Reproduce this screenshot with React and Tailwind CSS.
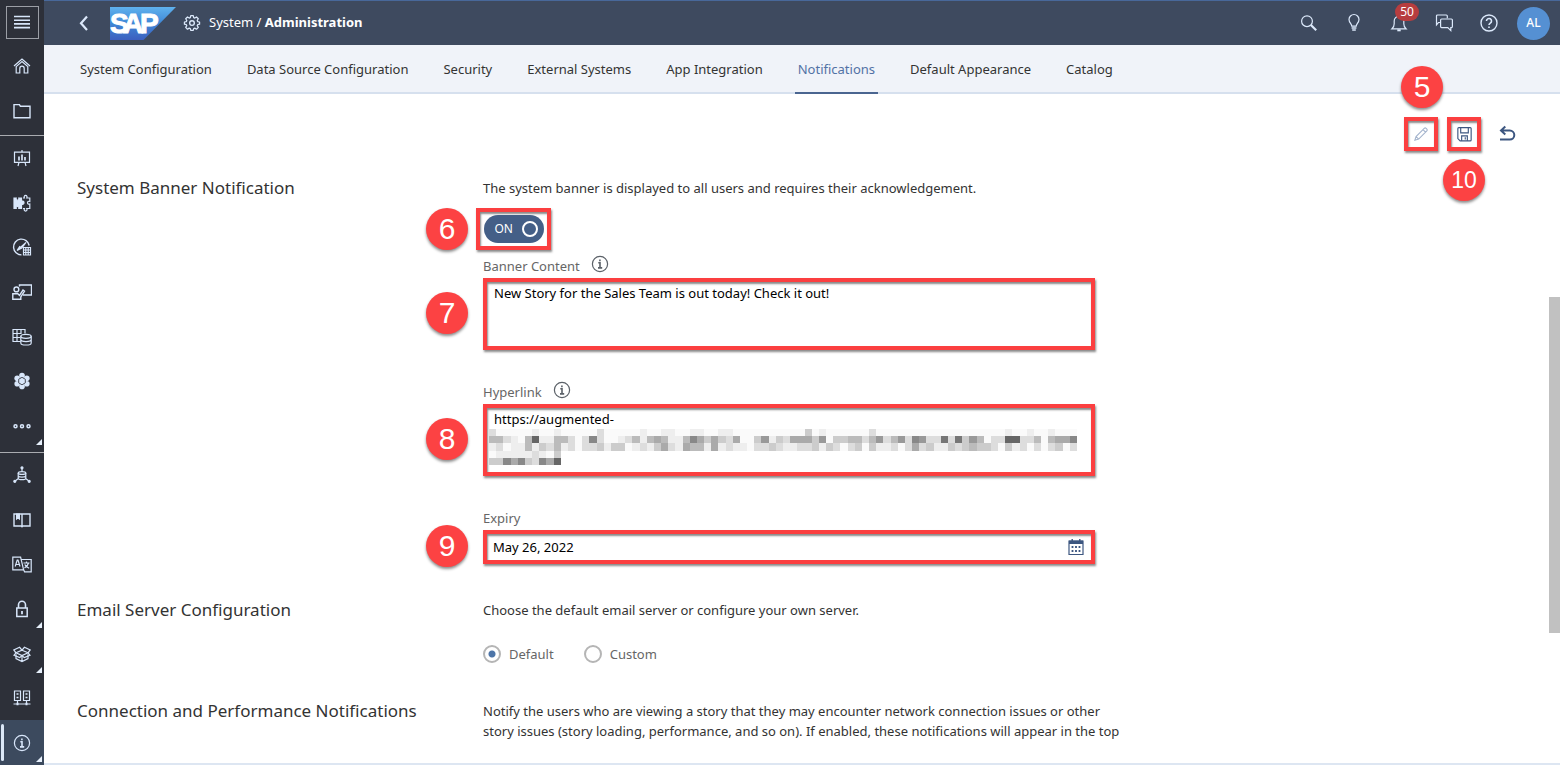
import React, { useState } from "react";

const ICONS = {
  menu: <path d="M2 4.5h16M2 8.2h16M2 11.9h16M2 15.6h16" strokeWidth="1.6" />,
  home: (
    <>
      <path d="M2 10 10 3l8 7" />
      <path d="M4.2 10.6 10 5.6l5.8 5v6.4h-3.6v-4.6a2.2 2.2 0 0 0-4.4 0V17H4.2z" />
    </>
  ),
  folder: <path d="M2 3.6h5.4l1 1.6H18v11.6H2z" strokeWidth="1.4" />,
  board: (
    <>
      <path d="M2.5 4.2h15v10.2h-15zM10 2v2M7 14.4 6 18M13 14.4l1 3.6" />
      <path d="M7 8.5v4M10 6.5v6M13 9v3.5" strokeWidth="1.7" />
    </>
  ),
  puzzle: (
    <>
      <path
        d="M2 5h2.200c-.4 1.400.4 2.200 1.300 2.200S7.200 6.400 6.800 5H9.500v3.200c1.600-.6 2.500.3 2.500 1.500s-.9 2.100-2.500 1.500V15.500H6.800c.4-1.400-.4-2.200-1.300-2.200s-1.700.8-1.300 2.200H2z"
        fill="currentColor"
      />
      <path d="M11 5h1.400c-.6-1.500 0-2.600 1.200-2.600s1.800 1.100 1.200 2.600h3v3.400c-1.400-.5-2.300.2-2.300 1.300s.9 1.800 2.300 1.300v4.500h-3c.6 1.500 0 2.600-1.200 2.600s-1.800-1.100-1.200-2.600H11" />
    </>
  ),
  compass: (
    <>
      <path d="M17.200 8.500A7.900 7.900 0 1 0 9.500 17.900" strokeWidth="1.400" />
      <path d="M5 13.500 14 5.500 9.800 11zM5 13.500l3-4.500" />
      <path d="M11.500 10.500h7v7.500h-7zM11.500 13h7M11.500 15.500h7M13.800 10.500V18M16.200 10.500V18" />
    </>
  ),
  presenter: (
    <>
      <path d="M7.500 4.500V3h12v10h-8.500" strokeWidth="1.400" />
      <circle cx="4.400" cy="7.400" r="2.400" strokeWidth="1.400" />
      <path d="M.8 17.300v-5.600h5l1.700 1.600L11 8l1.500 1.100L8.800 15v2.300z" strokeWidth="1.400" />
    </>
  ),
  griddb: (
    <>
      <path d="M8.500 14.500H1V2.500h12v4M1 6.500h8M1 10.500h7M5 2.500v12M9 2.500v4.500" />
      <ellipse cx="14" cy="9.300" rx="5.200" ry="2" />
      <path d="M8.800 9.300v6.600c0 1.200 2.300 2.100 5.200 2.100s5.200-.9 5.200-2.100V9.300M8.800 12.600c0 1.200 2.300 2 5.200 2s5.200-.8 5.200-2" />
    </>
  ),
  hexes: (
    <>
      <g fill="currentColor" stroke="none">
        <circle cx="10" cy="4.600" r="2.800" />
        <circle cx="10" cy="15.400" r="2.800" />
        <circle cx="5.200" cy="7.300" r="2.800" />
        <circle cx="14.800" cy="7.300" r="2.800" />
        <circle cx="5.200" cy="12.700" r="2.800" />
        <circle cx="14.800" cy="12.700" r="2.800" />
      </g>
      <path d="m10 6.300 3.300 1.900v3.700L10 13.800l-3.300-1.900V8.200z" fill="currentColor" stroke="#2d3039" strokeWidth=".8" />
    </>
  ),
  more: (
    <g strokeWidth="1.500">
      <circle cx="3.500" cy="10.200" r="1.500" />
      <circle cx="10" cy="10.200" r="1.500" />
      <circle cx="16.500" cy="10.200" r="1.500" />
    </g>
  ),
  dbnet: (
    <>
      <ellipse cx="10" cy="8" rx="3.800" ry="1.400" />
      <path d="M6.200 8v5.200c0 .9 1.700 1.500 3.800 1.500s3.800-.6 3.800-1.500V8M6.200 10.600c0 .9 1.700 1.500 3.800 1.500s3.800-.6 3.800-1.500M10 4v2.500M6 13.800l-2.500 2M14 13.800l2.500 2" />
      <g fill="currentColor">
        <circle cx="10" cy="2.800" r="1" />
        <circle cx="2.800" cy="16.300" r="1" />
        <circle cx="17.200" cy="16.300" r="1" />
      </g>
    </>
  ),
  book: (
    <>
      <path d="M2 4h16v12h-7.200l-.8.800-.8-.8H2zM10 4v12.500" strokeWidth="1.400" />
      <path d="M4.600 4h2.800v5L6 7.800 4.600 9z" fill="currentColor" />
    </>
  ),
  translate: (
    <>
      <path d="M.8 3.200h7.800l3 12.600H.8zM9.200 5.500h10v12.300h-6.600l-1-2" />
      <path d="m3.200 12.500 2-6.500h.8l2 6.500M3.800 10.500h3.600M11.500 9h6M14.500 7.500V9M16.500 9c-.6 2.500-2 4-4 5M12.800 10.500c.8 1.800 2.200 3 4.400 3.800" />
    </>
  ),
  lock: (
    <>
      <path d="M4.800 9h10.400v8.600H4.800z" strokeWidth="1.500" />
      <path d="M6.500 9V5.800a3.500 3.500 0 0 1 7 0V9" strokeWidth="1.600" />
      <path d="M10 12v3.200" strokeWidth="1.800" />
    </>
  ),
  box: (
    <>
      <path d="m10 6.200 6 2.600-6 2.700-6-2.700zM4 10.300v4.300l6 3 6-3v-4.300M10 11.500v6" />
      <path d="M4 8.800 1.800 5.900l5.800-2.600L10 6.200l2.400-2.900 5.800 2.600L16 8.800l2 2.400-5.700 2.400L10 11.500l-2.300 2.100L2 11.200z" />
    </>
  ),
  servers: (
    <>
      <path d="M2.500 3h6v9.500h-6zM11.500 3h6v9.500h-6zM5.500 12.500v3.500M14.500 12.500v3.500M1.500 16h17" />
      <path d="M5.500 5.200v1.600M5.500 8.700v1.600M14.500 5.200v1.600M14.500 8.700v1.600" strokeWidth="2" />
      <path d="M4.500 16h2M13.500 16h2" strokeWidth="2.600" />
    </>
  ),
  info: (
    <>
      <circle cx="10" cy="10" r="7.600" />
      <path d="M8.300 8.800H10v5M8 13.900h4.200M9.900 5.400v1.800" strokeWidth="1.600" />
    </>
  ),
  gear: (
    <>
      <path
        d="M8.600 1.900h2.800l.5 2.100 1.200.5 1.900-1.200 2 2-1.200 1.900.5 1.200 2.100.5v2.400l-2.100.5-.5 1.200 1.200 1.900-2 2-1.900-1.200-1.200.5-.5 2.100H8.600l-.5-2.100-1.200-.5L5 16.900l-2-2L4.200 13l-.5-1.200-2.100-.5V8.900l2.100-.5.5-1.200L3 5.300l2-2 1.900 1.200L8.100 4z"
        strokeLinejoin="round"
        strokeWidth="1.400"
      />
      <circle cx="10" cy="10.100" r="2.600" strokeWidth="1.500" />
    </>
  ),
  search: (
    <>
      <circle cx="8" cy="8.200" r="5.400" />
      <path d="m11.900 12 5.300 5.200" strokeWidth="2.200" />
    </>
  ),
  bulb: (
    <>
      <path d="M7.800 13.200c0-2.200-2.800-3.600-2.800-6.700a5 5 0 0 1 10 0c0 3.100-2.800 4.500-2.800 6.700z" />
      <path d="M7.600 15h4.800M8.200 17h3.600" strokeWidth="1.500" />
    </>
  ),
  bell: (
    <>
      <path d="M3 15.800h14c-1.800-1.600-2.200-3-2.200-5V8a4.800 4.800 0 0 0-9.600 0v2.800c0 2-.4 3.400-2.200 5z" />
      <path d="M8.300 17.300h3.400" strokeWidth="2" />
    </>
  ),
  chat: (
    <>
      <path d="M6.200 9.500H4.400L2.500 11.800V3a1 1 0 0 1 1-1h8.800a1 1 0 0 1 1 1v2.300" />
      <path d="M7.600 6h9.800a1 1 0 0 1 1 1v6.600a1 1 0 0 1-1 1h-.6v3l-3-3H7.600a1 1 0 0 1-1-1V7a1 1 0 0 1 1-1z" />
    </>
  ),
  help: (
    <>
      <circle cx="10" cy="10" r="8" strokeWidth="1.400" />
      <path d="M7.500 8a2.500 2.500 0 1 1 3.800 2.100c-.9.600-1.300 1-1.300 2M10 13.400v1.700" strokeWidth="1.600" />
    </>
  ),
  pencil: (
    <path d="m3.200 16.900 1.300-4.100L13.600 3.700a1.500 1.500 0 0 1 2.100 0l.8.800a1.500 1.500 0 0 1 0 2.100l-9.100 9.100zM12.200 5.200 15 8M4.500 12.800l2.900 2.900" />
  ),
  save: (
    <>
      <path d="M4 2.700h12a1 1 0 0 1 1 1v12a1 1 0 0 1-1 1H5.400L3 14.300V3.700a1 1 0 0 1 1-1z" />
      <path d="M6 2.700v5.600h8V2.700M7 16.700v-5.200h6v5.200M10.800 13v2.200" />
    </>
  ),
  undo: <path d="M8.300 2.600 4 6.600l4.300 4M4.300 6.600h8.500a4.500 4.500 0 0 1 0 9H3" strokeWidth="2" />,
  calendar: (
    <>
      <path d="M3 4h14v13.500H3z" />
      <path d="M3 5.300h14" strokeWidth="3.400" />
      <path d="M6.200 2v3M13.800 2v3" strokeWidth="1.400" />
      <path d="M5.600 10h1.800M9.100 10h1.800M12.600 10h1.800M5.600 14h1.800M9.100 14h1.800M12.600 14h1.800" strokeWidth="1.800" />
    </>
  ),
  back: <path d="m13 3.500-6 6.700 6 6.700" strokeWidth="2.200" />,
};

function Icon({ name, className = "size-5" }) {
  return (
    <svg viewBox="0 0 20 20" className={className} fill="none" stroke="currentColor" strokeWidth="1.200" aria-hidden="true">
      {ICONS[name]}
    </svg>
  );
}

const NAV_TOP = [
  { icon: "board", label: "Stories" },
  { icon: "puzzle", label: "Analytic Applications" },
  { icon: "compass", label: "Analyzer" },
  { icon: "presenter", label: "Digital Boardroom" },
  { icon: "griddb", label: "Modeler" },
  { icon: "hexes", label: "Predictive" },
  { icon: "more", label: "More", corner: true },
];

const NAV_BOTTOM = [
  { icon: "dbnet", label: "Connections" },
  { icon: "book", label: "Content Network" },
  { icon: "translate", label: "Translation" },
  { icon: "lock", label: "Security", corner: true },
  { icon: "box", label: "Transport", corner: true },
  { icon: "servers", label: "Deployment" },
  { icon: "info", label: "System", corner: true, active: true },
];

function NavItem({ icon, label, corner, active }) {
  return (
    <button
      aria-label={label}
      className={`relative flex w-full flex-1 items-center justify-center ${active ? "bg-[#3c4a5e]" : ""}`}
    >
      {active && <span className="absolute inset-y-1 left-px w-[3px] rounded bg-[#dbe8f8]" />}
      <Icon name={icon} />
      {corner && (
        <svg viewBox="0 0 6 6" className="absolute right-[2px] bottom-[3px] size-[6px]" aria-hidden="true">
          <path d="M6 0v6H0z" fill="#e6effb" />
        </svg>
      )}
    </button>
  );
}

function Sidebar() {
  return (
    <nav className="flex h-full w-11 shrink-0 flex-col bg-[#2d3039] text-[#d8e6fa]">
      <div className="flex h-[135px] shrink-0 flex-col pb-[2px]">
        <div className="flex flex-1 items-center justify-center">
          <button aria-label="Menu" className="flex size-[33px] items-center justify-center border border-[#9b9ea5]">
            <Icon name="menu" />
          </button>
        </div>
        <NavItem icon="home" label="Home" />
        <NavItem icon="folder" label="Files" />
      </div>
      <div className="flex flex-1 flex-col border-y border-[#a9abb0] pb-1">
        {NAV_TOP.map((item) => (
          <NavItem key={item.label} {...item} />
        ))}
      </div>
      <div className="flex flex-1 flex-col">
        {NAV_BOTTOM.map((item) => (
          <NavItem key={item.label} {...item} />
        ))}
      </div>
    </nav>
  );
}

function Logo() {
  return (
    <svg viewBox="0 0 66 33" className="h-[33px] w-[66px]" role="img" aria-label="SAP">
      <defs>
        <linearGradient id="sap" x1="0" y1="0" x2="0" y2="1">
          <stop offset="0" stopColor="#5fb2ee" />
          <stop offset="0.5" stopColor="#3f87d6" />
          <stop offset="1" stopColor="#3c5fbf" />
        </linearGradient>
      </defs>
      <path d="M0 0h66L33.500 33H0z" fill="url(#sap)" />
      <text x="0 13 30" y="26" fontFamily="Liberation Sans, sans-serif" fontWeight="700" fontSize="28" fill="#fff" stroke="#fff" strokeWidth="1">
        SAP
      </text>
    </svg>
  );
}

function Header() {
  return (
    <header className="flex h-[45px] shrink-0 items-center border-t border-[#48689a] bg-[#3e4a5f] pr-[10px] pl-[30px] text-[#dce9fb]">
      <button aria-label="Back">
        <Icon name="back" />
      </button>
      <div className="ml-4">
        <Logo />
      </div>
      <Icon name="gear" className="ml-[7px] size-[18px]" />
      <h1 className="ml-2 flex-1 text-white">
        System / <b className="font-bold">Administration</b>
      </h1>
      <div className="flex items-center gap-[25px]">
        <button aria-label="Search"><Icon name="search" /></button>
        <button aria-label="Tips"><Icon name="bulb" /></button>
        <button aria-label="Notifications" className="relative">
          <Icon name="bell" />
          <span className="absolute -top-[10px] left-[6px] flex h-[18px] w-6 items-center justify-center rounded-full bg-[#b73d3f] text-xs text-white">
            50
          </span>
        </button>
        <button aria-label="Chat"><Icon name="chat" /></button>
        <button aria-label="Help"><Icon name="help" /></button>
        <button className="-ml-[7px] flex size-[33px] items-center justify-center rounded-full bg-[#5590d3] text-xs font-medium text-white">
          AL
        </button>
      </div>
    </header>
  );
}

const TABS = [
  "System Configuration",
  "Data Source Configuration",
  "Security",
  "External Systems",
  "App Integration",
  "Notifications",
  "Default Appearance",
  "Catalog",
];

function Tabs() {
  return (
    <nav className="flex h-[49px] shrink-0 gap-[29px] border-b-2 border-[#d6e0ee] bg-[#f0f3f9] pl-[33px]">
      {TABS.map((tab) => (
        <a
          key={tab}
          href="#"
          className={`-mb-[2px] flex items-center border-b-2 px-[3px] pt-[2px] whitespace-nowrap ${
            tab === "Notifications" ? "border-[#4a6590] text-[#5272a5]" : "border-transparent text-[#333]"
          }`}
        >
          {tab}
        </a>
      ))}
    </nav>
  );
}

function Callout({ n, className }) {
  return (
    <span
      className={`absolute flex size-[42px] items-center justify-center rounded-full bg-[#fc4243] font-['Liberation_Sans',sans-serif] leading-none text-white shadow-[0_2px_3px_rgba(0,0,0,0.45)] ${
        n > 9 ? "text-[23px]" : "text-[30px]"
      } ${className}`}
    >
      {n}
    </span>
  );
}

const FRAME = "border-4 border-[#fb3f40] shadow-[1px_2px_2px_rgba(60,60,60,0.6),inset_1px_2px_2px_rgba(60,60,60,0.6)]";

function FieldLabel({ htmlFor, children, info }) {
  return (
    <div className="flex h-5 items-center gap-[10px] text-[#666]">
      <label htmlFor={htmlFor}>{children}</label>
      {info && (
        <button aria-label={`About ${children}`} className="mb-1 text-[#5b6168]">
          <Icon name="info" />
        </button>
      )}
    </div>
  );
}

const PIXELS = [
  "dfffffeffefffffdfffffeffeeffeeffeeffffffffffcfeffffffdffffffffffffffffffeffeffefff",
  "bbdefb6eebbdfd8dffedbebabeeb8acacdaffc9ecdaaac9fccbbdb9db9d89dd7d7c9bfdd66ddbfbaa8",
  "edfeebecdbedfddceccfedecadeabbeaedeefddcdeeddcecdfdcfceedfdadceecdcbccdfcedfdfdcfde",
  "feeeeedefc",
  "cc8a8cd8a6",
].map((row) => [...row].slice(0, 82));

function Mosaic() {
  return (
    <svg viewBox="0 0 82 5" preserveAspectRatio="none" className="absolute top-[25px] left-[6px] h-9 w-[588px]" shapeRendering="crispEdges" aria-hidden="true">
      {PIXELS.map((row, y) =>
        row.map((c, x) => (
          <rect key={`${x}-${y}`} x={x} y={y} width="1" height="1" fill={c === "f" ? "#fafafa" : `#${c}${c}${c}`} />
        ))
      )}
    </svg>
  );
}

function Section({ title, children }) {
  return (
    <section className="grid grid-cols-[406px_minmax(0,680px)] leading-5">
      <h2 className="text-[17px] leading-5 text-[#333]">{title}</h2>
      <div>{children}</div>
    </section>
  );
}

function Radio({ label, checked, onChange }) {
  return (
    <label className="flex items-center gap-2 text-[#666]">
      <input
        type="radio"
        name="server"
        checked={checked}
        onChange={onChange}
        className="size-[18px] appearance-none rounded-full border-2 border-[#b5b5b5] bg-white checked:bg-[radial-gradient(circle,#4d75a8_0_3px,#fff_4px)]"
      />
      {label}
    </label>
  );
}

function NotificationSettings() {
  const [on, setOn] = useState(true);
  const [server, setServer] = useState("default");
  return (
    <main className="relative min-h-0 flex-1 bg-white pl-[33px]">
      <div className="flex justify-end gap-[9px] pt-[23px] pr-9 text-[#3c5680]">
        <div className="relative">
          <button aria-label="Edit" className={`flex size-[34px] items-center justify-center text-[#a3b3cc] ${FRAME}`}>
            <Icon name="pencil" className="size-[18px]" />
          </button>
          <Callout n={5} className="-top-[51px] -left-[3px]" />
        </div>
        <div className="relative">
          <button aria-label="Save" className={`flex size-[34px] items-center justify-center ${FRAME}`}>
            <Icon name="save" className="size-[19px]" />
          </button>
          <Callout n={10} className="top-[42px] -left-[4px]" />
        </div>
        <button aria-label="Undo" className="flex size-[34px] items-center justify-center">
          <Icon name="undo" />
        </button>
      </div>

      <div className="mt-[27px] flex flex-col">
        <Section title="System Banner Notification">
          <p className="text-[#333]">The system banner is displayed to all users and requires their acknowledgement.</p>
          <div className={`relative mt-[10px] -ml-[7px] flex h-[42px] w-[75px] items-center justify-center ${FRAME}`}>
            <button
              role="switch"
              aria-checked={on}
              aria-label="System banner"
              onClick={() => setOn(!on)}
              className="flex h-7 w-[60px] shrink-0 items-center justify-between rounded-full bg-[#445f87] pr-[6px] pl-[11px] text-xs text-white"
            >
              {on ? "ON" : "OFF"}
              <span className="size-4 rounded-full border-2 border-white" />
            </button>
            <Callout n={6} className="-top-1 -left-[54px]" />
          </div>
          <div className="flex max-w-[612px] flex-col gap-8 pt-[6px]">
            <div className="flex flex-col gap-[2px]">
              <FieldLabel htmlFor="content" info>Banner Content</FieldLabel>
              <div className="relative flex">
                <textarea
                  id="content"
                  defaultValue="New Story for the Sales Team is out today! Check it out!"
                  className={`h-[72px] w-full resize-none px-[7px] py-px leading-5 text-black outline-none ${FRAME}`}
                />
                <Callout n={7} className="top-[14px] -left-[57px]" />
              </div>
            </div>
            <div className="flex flex-col gap-[2px]">
              <FieldLabel htmlFor="link" info>Hyperlink</FieldLabel>
              <div className="relative flex">
                <textarea
                  id="link"
                  defaultValue="https://augmented-"
                  className={`h-[72px] w-full resize-none px-[7px] py-px leading-5 text-black outline-none ${FRAME}`}
                />
                <Mosaic />
                <Callout n={8} className="top-[14px] -left-[57px]" />
              </div>
            </div>
            <div className="flex flex-col gap-[2px]">
              <FieldLabel htmlFor="expiry">Expiry</FieldLabel>
              <div className={`relative flex h-[34px] items-center pr-[5px] pl-[6px] ${FRAME}`}>
                <input id="expiry" defaultValue="May 26, 2022" className="min-w-0 flex-1 bg-transparent text-black outline-none" />
                <button aria-label="Open calendar" className="text-[#3c5680]">
                  <Icon name="calendar" />
                </button>
                <Callout n={9} className="-top-[9px] -left-[61px]" />
              </div>
            </div>
          </div>
        </Section>

        <div className="mt-9">
          <Section title="Email Server Configuration">
            <p className="text-[#333]">Choose the default email server or configure your own server.</p>
            <div className="mt-6 flex gap-[30px]">
              <Radio label="Default" checked={server === "default"} onChange={() => setServer("default")} />
              <Radio label="Custom" checked={server === "custom"} onChange={() => setServer("custom")} />
            </div>
          </Section>
        </div>

        <div className="mt-[37px]">
          <Section title="Connection and Performance Notifications">
            <p className="text-[#333]">
              Notify the users who are viewing a story that they may encounter network connection issues or other
              <br />
              story issues (story loading, performance, and so on). If enabled, these notifications will appear in the top
            </p>
          </Section>
        </div>
      </div>
      <div className="absolute top-[203px] right-0 h-[336px] w-[11px] bg-[#c1c1c1]" />
    </main>
  );
}

export default function App() {
  return (
    <div className="flex h-screen overflow-hidden font-['Noto_Sans',sans-serif] text-[13px]">
      <Sidebar />
      <div className="flex min-w-0 flex-1 flex-col">
        <Header />
        <Tabs />
        <NotificationSettings />
        <div className="h-[2px] shrink-0 bg-[#dde6f2]" />
      </div>
    </div>
  );
}
